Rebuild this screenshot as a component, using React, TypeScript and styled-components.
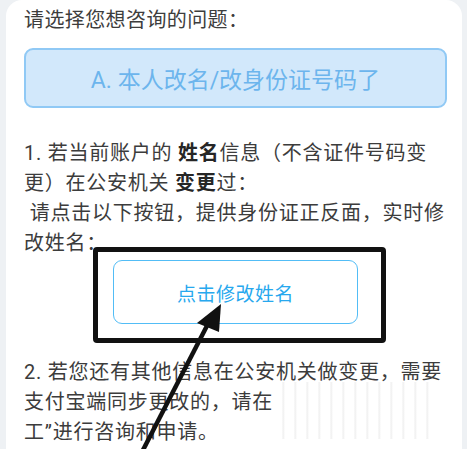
import React from 'react';
import styled, { createGlobalStyle } from 'styled-components';

const GlobalStyle = createGlobalStyle`
  html, body {
    margin: 0;
    padding: 0;
    background: #eef1f4;
  }
  body {
    font-family: Roboto, "Noto Sans CJK SC", "Noto Sans", sans-serif;
  }
`;

const Page = styled.div`
  position: relative;
  width: 467px;
  height: 449px;
  overflow: hidden;
`;

const Card = styled.div`
  margin-left: 6px;
  width: 456px;
  height: 449px;
  box-sizing: border-box;
  padding: 6px 15px 0 18px;
  background: #ffffff;
  border-radius: 16px 16px 0 0;
`;

const Title = styled.div`
  font-size: 20px;
  line-height: 28px;
  color: #3d3d3d;
  letter-spacing: 0.4px;
`;

const Option = styled.div`
  margin-top: 14px;
  height: 60px;
  box-sizing: border-box;
  display: flex;
  align-items: center;
  justify-content: center;
  background: #d2e8fb;
  border: 2px solid #90c9f5;
  border-radius: 9px;
  color: #6cb5ed;
  font-size: 23px;
`;

const Para = styled.p<{ $top: number }>`
  position: relative;
  margin: ${(p) => p.$top}px 0 0;
  font-size: 20px;
  line-height: 30px;
  letter-spacing: 0.75px;
  color: #3c3c3c;
  white-space: pre-wrap;
`;

const Strong = styled.b`
  font-weight: 700;
  color: #262626;
`;

const ButtonRow = styled.div`
  display: flex;
  justify-content: center;
  margin-top: 2px;
`;

const EditButton = styled.button`
  width: 245px;
  height: 64px;
  box-sizing: border-box;
  background: #ffffff;
  border: 1.5px solid #52bdf6;
  border-radius: 9px;
  color: #27a8ee;
  font-family: Roboto, "Noto Sans CJK SC", sans-serif;
  font-size: 19px;
  letter-spacing: 0.5px;
  padding: 0;
`;

/* faded white patch lying over the end of the paragraph */
const Watermark = styled.div`
  position: absolute;
  left: 249px;
  top: 25px;
  width: 158px;
  height: 57px;
  background: repeating-linear-gradient(
    90deg,
    #ffffff 0px,
    #ffffff 9px,
    #eeeeee 10px,
    #ffffff 12px
  );
`;

const Frame = styled.div`
  position: absolute;
  left: 93px;
  top: 247px;
  width: 293px;
  height: 96px;
  box-sizing: border-box;
  border: 5px solid #111111;
  border-radius: 4px;
  pointer-events: none;
`;

const ArrowLayer = styled.svg`
  position: absolute;
  left: 0;
  top: 0;
  pointer-events: none;
`;

export default function App() {
  return (
    <Page>
      <GlobalStyle />
      <Card>
        <Title>请选择您想咨询的问题：</Title>
        <Option>A. 本人改名/改身份证号码了</Option>
        <Para $top={30}>
          1. 若当前账户的 <Strong>姓名</Strong>信息（不含证件号码变更）在公安机关 <Strong>变更</Strong>过：
          <br />
          {' 请点击以下按钮，提供身份证正反面，实时修改姓名：'}
        </Para>
        <ButtonRow>
          <EditButton type="button">点击修改姓名</EditButton>
        </ButtonRow>
        <Para $top={33}>
          2. 若您还有其他信息在公安机关做变更，需要支付宝端同步更改的，请在“我的客服”转人
          <br />
          工”进行咨询和申请。
          <Watermark />
        </Para>
      </Card>
      <Frame />
      <ArrowLayer width="467" height="449" viewBox="0 0 467 449">
        <line x1="142" y1="452" x2="211" y2="318" stroke="#111" strokeWidth="4.5" />
        <polygon points="221,304 197,323 219,332" fill="#111" />
      </ArrowLayer>
    </Page>
  );
}
